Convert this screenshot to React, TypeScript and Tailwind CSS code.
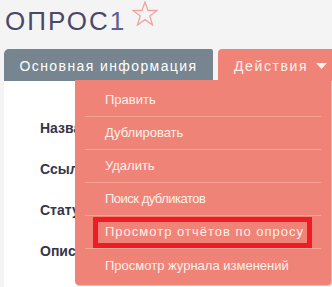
import React from "react";

const items = [
  "Править",
  "Дублировать",
  "Удалить",
  "Поиск дубликатов",
  "Просмотр отчётов по опросу",
  "Просмотр журнала изменений",
];

export default function App() {
  return (
    <div className="w-[332px] h-[287px] overflow-hidden bg-[#f4f4f4] flex flex-col font-['Liberation_Sans',Arial,sans-serif]">
      <div className="h-[49px] shrink-0 flex items-start pl-[5px]">
        <div className="pt-[6px] text-[26px] leading-[30px] text-[#4a4868] tracking-[2px]">
          ОПРОС
        </div>
        <div className="pt-[6px] text-[26px] leading-[30px] text-[#5c5f95]">1</div>
        <svg className="ml-[8px] mt-[1px]" width="26" height="25" viewBox="0 0 26 25">
          <polygon
            points="13,1 16,9.5 25,9.5 17.8,15 20.5,24 13,18.6 5.5,24 8.2,15 1,9.5 10,9.5"
            fill="none"
            stroke="#f2a3a0"
            strokeWidth="1.3"
            strokeLinejoin="miter"
          />
        </svg>
      </div>
      <div className="flex shrink-0 pl-[4px] h-[32px]">
        <div className="w-[209px] bg-[#778590] rounded-tl-[5px] rounded-tr-[2px] flex justify-center pt-[9px] text-[14px] leading-[16px] text-white tracking-[1.4px]">
          Основная информация
        </div>
        <div className="ml-[5px] flex-1 bg-[#f08377] rounded-tl-[4px] flex items-start pt-[9px] pl-[16px] text-[14px] leading-[16px] text-[#fdf1ea] tracking-[1.6px]">
          Действия
          <svg className="ml-[8px] mt-[5px]" width="11" height="6" viewBox="0 0 11 6">
            <polygon points="0,0 11,0 5.5,6" fill="#fdf1ea" />
          </svg>
        </div>
      </div>
      <div className="relative flex-1 bg-white ml-[4px]">
        <div className="flex flex-col pl-[36px] pt-[39px] gap-[25px] text-[14px] leading-[16px] font-bold text-[#353549]">
          <div>Название</div>
          <div>Ссылка</div>
          <div>Статус</div>
          <div>Описание</div>
          <div>Вопросы</div>
        </div>
        <div className="absolute left-[71px] top-[-1px] w-[256px] h-[205px] bg-[#f08377] rounded-b-[4px] pt-[4px] shadow-[1px_1px_0_#f7b3ab]">
          {items.map((t, i) => (
            <div key={t} className="relative mx-[10px] h-[33px]">
              <div
                className={
                  "h-full flex items-center pl-[20px] text-[13px] leading-[16px] text-[#fdf1ea] " +
                  (i === 4 ? "tracking-[1px] " : "") +
                  (i === 3 ? "tracking-[-0.5px] " : "") +
                  (i < items.length - 1 ? "border-b border-[#f6a496]" : "")
                }
              >
                {t}
              </div>
              {i === 4 && (
                <div className="absolute left-[8px] top-[1px] w-[219px] h-[31px] border-[5px] border-[#ee1c24]" />
              )}
            </div>
          ))}
        </div>
      </div>
    </div>
  );
}
